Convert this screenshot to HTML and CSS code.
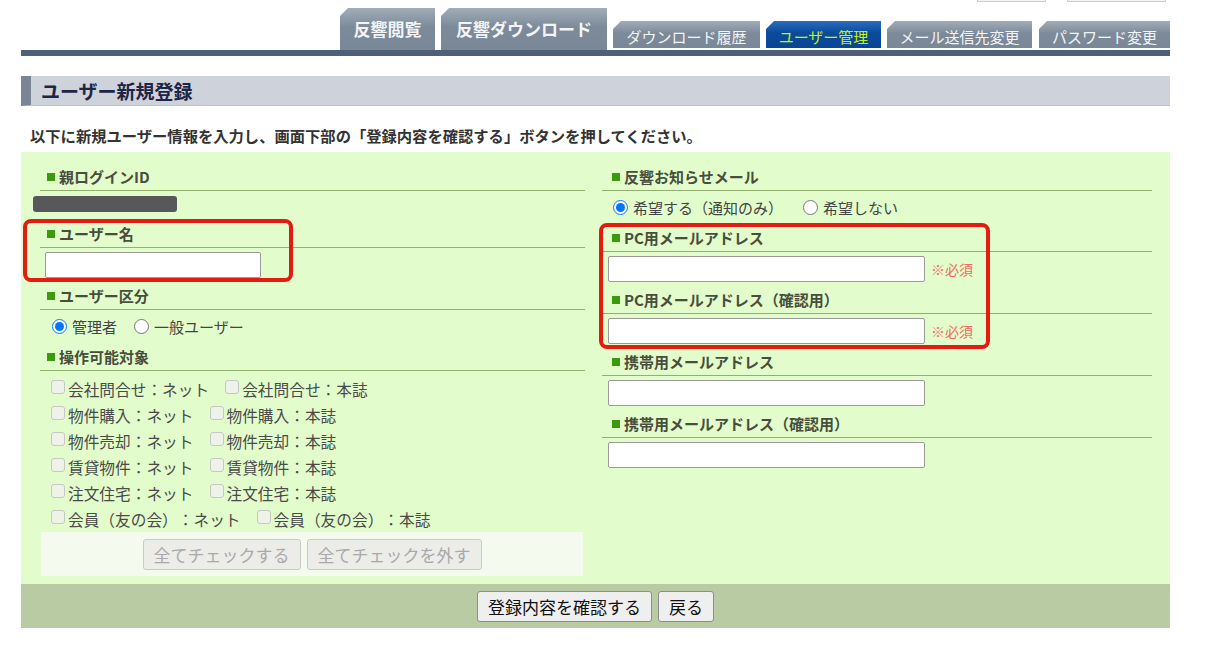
FILE: index.html
```html
<!DOCTYPE html>
<html lang="ja">
<head>
  <meta charset="UTF-8">
  <meta name="viewport" content="width=device-width, initial-scale=1.0">
  <title>ユーザー新規登録</title>
  <link rel="stylesheet" href="styles.css">
</head>
<body>
  <div class="page">
    <div class="toolbar">
      <span class="tool-btn tool-a"></span>
      <span class="tool-btn tool-b"></span>
    </div>

    <ul class="tabs">
      <li class="tab tab-big tab-view">反響閲覧</li>
      <li class="tab tab-big tab-dl">反響ダウンロード</li>
      <li class="tab tab-small tab-hist">ダウンロード履歴</li>
      <li class="tab tab-small tab-user active">ユーザー管理</li>
      <li class="tab tab-small tab-mail">メール送信先変更</li>
      <li class="tab tab-small tab-pass">パスワード変更</li>
    </ul>
    <div class="tab-line"></div>

    <h2 class="page-title">ユーザー新規登録</h2>
    <p class="lead">以下に新規ユーザー情報を入力し、画面下部の「登録内容を確認する」ボタンを押してください。</p>

    <form class="entry">
      <div class="entry-cols">
        <div class="col">
          <div class="field-label">親ログインID</div>
          <div class="masked"></div>

          <div class="marked marked-name">
            <div class="field-label">ユーザー名</div>
            <input type="text" class="text-input input-short">
          </div>

          <div class="field-label gap-top">ユーザー区分</div>
          <div class="radio-row">
            <label class="radio"><input type="radio" name="kind" checked>管理者</label>
            <label class="radio"><input type="radio" name="kind">一般ユーザー</label>
          </div>

          <div class="field-label gap-small">操作可能対象</div>
          <div class="check-list">
            <div class="check-row">
              <label class="check"><input type="checkbox" disabled>会社問合せ：ネット</label>
              <label class="check"><input type="checkbox" disabled>会社問合せ：本誌</label>
            </div>
            <div class="check-row">
              <label class="check"><input type="checkbox" disabled>物件購入：ネット</label>
              <label class="check"><input type="checkbox" disabled>物件購入：本誌</label>
            </div>
            <div class="check-row">
              <label class="check"><input type="checkbox" disabled>物件売却：ネット</label>
              <label class="check"><input type="checkbox" disabled>物件売却：本誌</label>
            </div>
            <div class="check-row">
              <label class="check"><input type="checkbox" disabled>賃貸物件：ネット</label>
              <label class="check"><input type="checkbox" disabled>賃貸物件：本誌</label>
            </div>
            <div class="check-row">
              <label class="check"><input type="checkbox" disabled>注文住宅：ネット</label>
              <label class="check"><input type="checkbox" disabled>注文住宅：本誌</label>
            </div>
            <div class="check-row">
              <label class="check"><input type="checkbox" disabled>会員（友の会）：ネット</label>
              <label class="check"><input type="checkbox" disabled>会員（友の会）：本誌</label>
            </div>
          </div>
          <div class="check-actions">
            <button type="button" class="btn btn-disabled" disabled>全てチェックする</button>
            <button type="button" class="btn btn-disabled" disabled>全てチェックを外す</button>
          </div>
        </div>

        <div class="col col-right">
          <div class="field-label">反響お知らせメール</div>
          <div class="radio-row radio-row-mail">
            <label class="radio"><input type="radio" name="notice" checked>希望する（通知のみ）</label>
            <label class="radio"><input type="radio" name="notice">希望しない</label>
          </div>

          <div class="marked marked-pc">
            <div class="field-label">PC用メールアドレス</div>
            <div class="input-row">
              <input type="text" class="text-input input-long">
              <span class="required">※必須</span>
            </div>
            <div class="field-label gap-top">PC用メールアドレス（確認用）</div>
            <div class="input-row">
              <input type="text" class="text-input input-long">
              <span class="required">※必須</span>
            </div>
          </div>

          <div class="field-label gap-top">携帯用メールアドレス</div>
          <div class="input-row">
            <input type="text" class="text-input input-long">
          </div>
          <div class="field-label gap-top">携帯用メールアドレス（確認用）</div>
          <div class="input-row">
            <input type="text" class="text-input input-long">
          </div>
        </div>
      </div>

      <div class="submit-bar">
        <button type="button" class="btn">登録内容を確認する</button>
        <button type="button" class="btn">戻る</button>
      </div>
    </form>
  </div>
</body>
</html>
```

FILE: styles.css
```css
body {
  margin: 0;
  font-family: "Noto Sans CJK JP", "Liberation Sans", sans-serif;
  color: #444;
  background: #fff;
  text-spacing-trim: space-all;
}
.page {
  width: 1149px;
  margin-left: 21px;
}
.toolbar {
  display: flex;
  justify-content: flex-end;
  gap: 21px;
  height: 2px;
  padding-right: 4px;
}
.tool-btn {
  height: 1px;
  border: 1px solid #cfcfcf;
  border-top: none;
  background: #f3f3f3;
}
.tool-a { width: 67px; }
.tool-b { width: 97px; }

.tabs {
  list-style: none;
  margin: 0;
  padding: 0;
  height: 48px;
  display: flex;
  justify-content: flex-end;
  align-items: flex-end;
  gap: 6px;
}
.tab {
  box-sizing: border-box;
  text-align: center;
  color: #f2f4f7;
  background: linear-gradient(#a2adb9, #7d8a99 45%, #7a8796);
  clip-path: polygon(8px 0, 100% 0, 100% 100%, 0 100%, 0 8px);
  white-space: nowrap;
}
.tab-big {
  height: 42px;
  padding-top: 8px;
  font-size: 17px;
  font-weight: bold;
  line-height: 26px;
}
.tab-small {
  height: 27px;
  margin-bottom: 2px;
  padding-top: 4px;
  font-size: 15px;
  line-height: 24px;
}
.tab.active {
  background: linear-gradient(#2a6cc0, #0b4a9b 45%, #0a4594);
  color: #c4f500;
}
.tab-view { width: 95px; }
.tab-dl { width: 166px; }
.tab-hist { width: 147px; }
.tab-user { width: 115px; }
.tab-mail { width: 145px; }
.tab-pass { width: 131px; margin-left: 1px; }
.tab-line {
  height: 6px;
  background: #4e6079;
}

.page-title {
  margin: 20px 0 0;
  height: 30px;
  box-sizing: border-box;
  padding-left: 10px;
  border-left: 10px solid #7a8697;
  border-bottom: 1px solid #bcc2ca;
  background: #ced3db;
  color: #1e2545;
  font-size: 19px;
  line-height: 29px;
}
.lead {
  margin: 19px 0 7px 9px;
  font-size: 15.3px;
  font-weight: bold;
  line-height: 20px;
  color: #333;
}

.entry {
  background: #e2fccb;
}
.entry-cols {
  display: grid;
  grid-template-columns: 545px 550px;
  column-gap: 17px;
  padding: 15px 0 8px 19px;
}
.col {
  display: flex;
  flex-direction: column;
  align-items: flex-start;
}
.field-label {
  align-self: stretch;
  padding: 0 0 3px 7px;
  border-bottom: 1px solid #93b06f;
  font-size: 15px;
  font-weight: bold;
  line-height: 20px;
  color: #484e3c;
}
.col-right .field-label {
  padding-left: 10px;
}
.field-label::before {
  content: "";
  display: inline-block;
  width: 8px;
  height: 8px;
  margin-right: 4px;
  background: #3b9a0d;
  vertical-align: 2px;
}
.gap-top { margin-top: 8px; }
.gap-small { margin-top: 6px; }

.masked {
  width: 144px;
  height: 16px;
  margin: 5px 0 12px -7px;
  border-radius: 3px;
  background: #58575a;
}
.marked {
  position: relative;
  align-self: stretch;
  display: flex;
  flex-direction: column;
  align-items: flex-start;
}
.marked::after {
  content: "";
  position: absolute;
  border: 4px solid #e41b10;
  border-radius: 8px;
  pointer-events: none;
}
.marked-name::after {
  top: -5px;
  left: -17px;
  width: 262px;
  height: 55px;
}
.marked-pc::after {
  top: -5px;
  left: -3px;
  width: 383px;
  height: 118px;
}

.text-input {
  box-sizing: border-box;
  height: 26px;
  margin: 4px 0 0;
  border: 1px solid #9a9a9a;
  border-radius: 2px;
  background: #fff;
}
.input-short {
  width: 216px;
  margin-left: 5px;
}
.input-row {
  display: flex;
  align-items: center;
  margin-top: 4px;
}
.input-row .text-input {
  margin: 0;
}
.input-row .input-long {
  width: 317px;
  margin-left: 6px;
}
.required {
  margin-left: 6px;
  font-size: 14px;
  color: #f26b63;
}

.radio-row {
  display: flex;
  height: 30px;
  align-items: center;
  margin-top: 1px;
  padding-left: 12px;
  gap: 17px;
}
.radio-row-mail {
  margin: 0 0 5px;
  height: 32px;
  padding-left: 11px;
  gap: 20px;
}
.radio {
  display: flex;
  align-items: center;
  font-size: 15px;
  color: #444;
}
.radio input {
  width: 15px;
  height: 15px;
  margin: 0 5px 0 0;
}

.check-list {
  margin-top: 5px;
}
.check-row {
  display: flex;
  height: 26px;
  align-items: center;
  padding-left: 11px;
  gap: 16px;
}
.check {
  display: flex;
  align-items: center;
  font-size: 15.7px;
  color: #4a4a4a;
}
.check input {
  appearance: none;
  box-sizing: border-box;
  width: 14px;
  height: 14px;
  margin: 0 3px 4px 0;
  border: 1px solid #c6c9c1;
  border-radius: 3px;
  background: #eef2e8;
}

.check-actions {
  box-sizing: border-box;
  width: 542px;
  height: 44px;
  margin: 0 0 0 1px;
  display: flex;
  justify-content: center;
  align-items: center;
  gap: 6px;
  background: #f4fbee;
}
.btn {
  height: 31px;
  padding: 0 10px;
  border: 1px solid #8d8d8d;
  border-radius: 3px;
  background: #efefef;
  font-family: inherit;
  font-size: 17px;
  line-height: 29px;
  color: #111;
}
.btn-disabled {
  border-color: #c9cbc6;
  background: #ecede9;
  color: #a9a9a9;
}

.submit-bar {
  height: 44px;
  display: flex;
  justify-content: center;
  align-items: center;
  gap: 6px;
  background: #b8cba3;
}
```
